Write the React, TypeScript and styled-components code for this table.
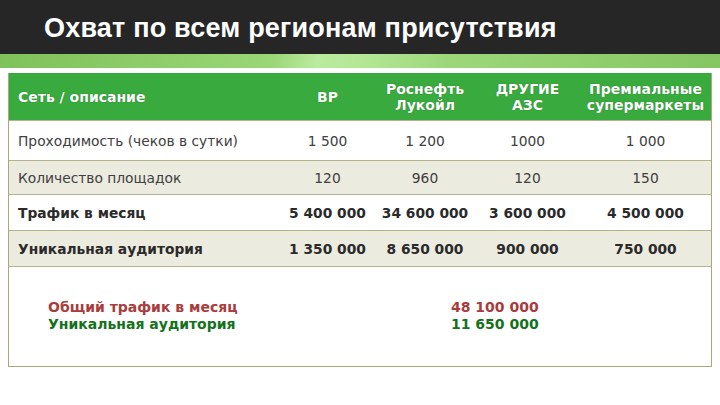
import React from "react";
import styled, { createGlobalStyle } from "styled-components";

const Global = createGlobalStyle`
  html, body { margin: 0; padding: 0; background: #ffffff; }
  body { width: 720px; height: 405px; overflow: hidden; }
`;

const Page = styled.div`
  width: 720px;
  height: 405px;
  display: flex;
  flex-direction: column;
  background: #ffffff;
`;

const TitleBar = styled.header`
  height: 54px;
  background: #262626;
  display: flex;
  align-items: center;
  padding: 2px 0 0 44px;
  box-sizing: border-box;
`;

const Title = styled.h1`
  margin: 0;
  font-family: "Liberation Sans", Arial, sans-serif;
  font-weight: 700;
  font-size: 27px;
  color: #ffffff;
  letter-spacing: 0.2px;
`;

const Band = styled.div`
  height: 14px;
  background:
    linear-gradient(100deg, rgba(255,255,255,0) 38%, rgba(210,255,190,0.5) 44%, rgba(255,255,255,0) 62%),
    linear-gradient(90deg, #7fc15a 0%, #95d270 30%, #a4dc82 50%, #92cf6e 80%, #86c563 100%);
`;

const Table = styled.div`
  margin: 5px 8px 0 8px;
  width: 704px;
  box-sizing: border-box;
  border: 1px solid #a9a87a;
  border-top: none;
  display: grid;
  grid-template-columns: 271px 95px 100px 105px 131px;
`;

const HeadCell = styled.div<{ $align?: string }>`
  height: 47px;
  background: #38aa3e;
  display: flex;
  align-items: center;
  justify-content: ${(p) => p.$align || "center"};
  text-align: center;
  padding: ${(p) => (p.$align ? "0 0 0 9px" : "0")};
  font-family: "DejaVu Sans", Verdana, sans-serif;
  font-weight: 700;
  font-size: 14px;
  line-height: 16px;
  color: #ffffff;
  white-space: nowrap;
  text-shadow: 0 0 1px rgba(0, 60, 0, 0.5);
`;

const Cell = styled.div<{ $h: number; $alt?: boolean; $bold?: boolean; $left?: boolean }>`
  height: ${(p) => p.$h}px;
  box-sizing: border-box;
  border-top: 1px solid #b4b38a;
  background: ${(p) => (p.$alt ? "#ecebdf" : "#ffffff")};
  display: flex;
  align-items: center;
  justify-content: ${(p) => (p.$left ? "flex-start" : "center")};
  padding: ${(p) => (p.$left ? "0 0 0 9px" : "0")};
  font-family: "DejaVu Sans", Verdana, sans-serif;
  font-weight: ${(p) => (p.$bold ? 700 : 400)};
  font-size: 13.8px;
  color: ${(p) => (p.$bold ? "#2a2a2a" : "#404040")};
  white-space: nowrap;
`;

const Footer = styled.div`
  grid-column: 1 / -1;
  height: 100px;
  box-sizing: border-box;
  border-top: 1px solid #b4b38a;
  display: grid;
  grid-template-columns: 403px 1fr;
  align-content: start;
  padding: 32px 0 0 39px;
  font-family: "DejaVu Sans", Tahoma, sans-serif;
  font-weight: 700;
  font-size: 14px;
  line-height: 17px;
`;

const Sum = styled.div<{ $tone: "red" | "green" }>`
  color: ${(p) => (p.$tone === "red" ? "#a83c3c" : "#13721a")};
`;

const header = ["BP", "Роснефть\nЛукойл", "ДРУГИЕ\nАЗС", "Премиальные\nсупермаркеты"];

const rows: { label: string; values: string[]; h: number; alt: boolean; bold: boolean }[] = [
  { label: "Проходимость (чеков в сутки)", values: ["1 500", "1 200", "1000", "1 000"], h: 40, alt: false, bold: false },
  { label: "Количество площадок", values: ["120", "960", "120", "150"], h: 34, alt: true, bold: false },
  { label: "Трафик в месяц", values: ["5 400 000", "34 600 000", "3 600 000", "4 500 000"], h: 36, alt: false, bold: true },
  { label: "Уникальная аудитория", values: ["1 350 000", "8 650 000", "900 000", "750 000"], h: 36, alt: true, bold: true },
];

export default function App() {
  return (
    <Page>
      <Global />
      <TitleBar>
        <Title>Охват по всем регионам присутствия</Title>
      </TitleBar>
      <Band />
      <Table>
        <HeadCell $align="flex-start">Сеть / описание</HeadCell>
        {header.map((h) => (
          <HeadCell key={h}>
            <span>
              {h.split("\n").map((l, i) => (
                <React.Fragment key={i}>
                  {i > 0 && <br />}
                  {l}
                </React.Fragment>
              ))}
            </span>
          </HeadCell>
        ))}
        {rows.map((r) => (
          <React.Fragment key={r.label}>
            <Cell $h={r.h} $alt={r.alt} $bold={r.bold} $left>
              {r.label}
            </Cell>
            {r.values.map((v, i) => (
              <Cell key={i} $h={r.h} $alt={r.alt} $bold={r.bold}>
                {v}
              </Cell>
            ))}
          </React.Fragment>
        ))}
        <Footer>
          <Sum $tone="red">Общий трафик в месяц</Sum>
          <Sum $tone="red">48 100 000</Sum>
          <Sum $tone="green">Уникальная аудитория</Sum>
          <Sum $tone="green">11 650 000</Sum>
        </Footer>
      </Table>
    </Page>
  );
}
